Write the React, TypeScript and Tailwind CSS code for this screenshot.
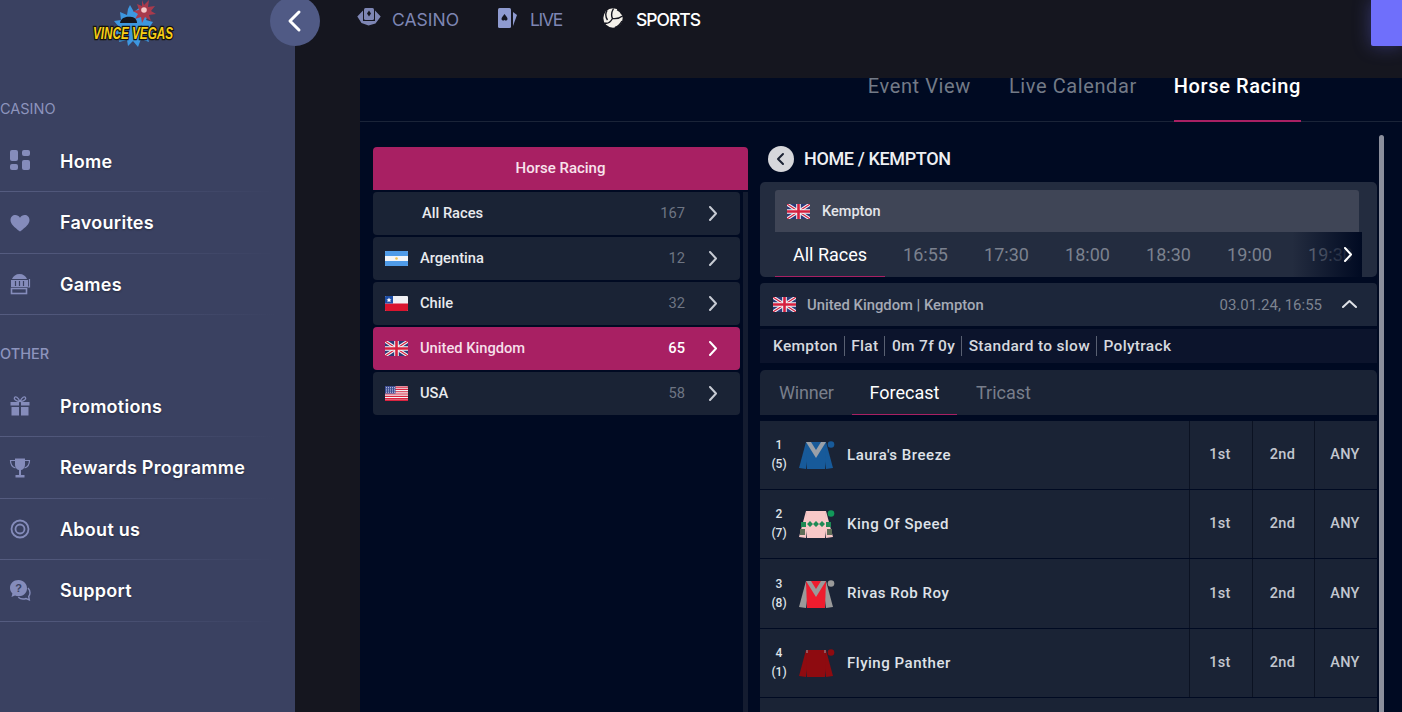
import React from "react";

const UK = () => (
  <svg width="23" height="15" viewBox="0 0 23 15" className="shrink-0 block">
    <rect width="23" height="15" rx="1" fill="#2b3a78" />
    <path d="M0 0L23 15M23 0L0 15" stroke="#f3f3f6" strokeWidth="3.2" />
    <path d="M0 0L23 15M23 0L0 15" stroke="#d5203f" strokeWidth="1.1" />
    <path d="M11.5 0V15M0 7.5H23" stroke="#f3f3f6" strokeWidth="4.6" />
    <path d="M11.5 0V15M0 7.5H23" stroke="#d5203f" strokeWidth="2.6" />
  </svg>
);
const AR = () => (
  <svg width="23" height="15" viewBox="0 0 23 15" className="shrink-0 block">
    <rect width="23" height="15" rx="1" fill="#f3f5f8" />
    <path d="M0 1a1 1 0 0 1 1-1h21a1 1 0 0 1 1 1v4H0z" fill="#4f9be8" />
    <path d="M0 10h23v4a1 1 0 0 1-1 1H1a1 1 0 0 1-1-1z" fill="#4f9be8" />
    <circle cx="11.5" cy="7.5" r="1.3" fill="#f2c14e" />
  </svg>
);
const CL = () => (
  <svg width="23" height="15" viewBox="0 0 23 15" className="shrink-0 block">
    <rect width="23" height="15" rx="1" fill="#f1f1f4" />
    <path d="M0 7.5h23V14a1 1 0 0 1-1 1H1a1 1 0 0 1-1-1z" fill="#d9142e" />
    <path d="M0 1a1 1 0 0 1 1-1h7v7.500H0z" fill="#1e4fa8" />
    <path d="M4 1.600l.8 1.600 1.700.2-1.300 1.100.4 1.700L4 5.300l-1.600.9.4-1.700-1.300-1.100 1.700-.2z" fill="#fff" />
  </svg>
);
const US = () => (
  <svg width="23" height="15" viewBox="0 0 23 15" className="shrink-0 block">
    <rect width="23" height="15" rx="1" fill="#f3f3f6" />
    <path d="M0 1.100H23M0 3.400H23M0 5.700H23M0 8H23M0 10.300H23M0 12.600H23" stroke="#d8233f" strokeWidth="1.150" />
    <rect y="13.400" width="23" height="1.600" fill="#d8233f" />
    <rect width="10.500" height="7.600" fill="#3f4f94" />
    <path d="M1 1.500h9M1 3.200h9M1 4.900h9M1 6.400h9" stroke="#dfe3f2" strokeWidth=".7" strokeDasharray="1 1" />
  </svg>
);

const Logo = () => (
  <svg width="90" height="54" viewBox="0 0 90 54" className="block">
    <path d="M42 5l4 7 5-4 2 6 8-1-3 7 7 2-4 6 7 7-9 0 2 7-8-3-3 8-5-6-5 5-1-6-8 2 2-7-8-2 6-6-5-6 7-1-1-8 7 3 1-6z" fill="#3d97e0" />
    <path d="M54 0l2 5 5-5-1 7 7-1-4 5 5 3-7 1 2 6-6-4-3 6-1-6-6 2 3-5-5-3 6-1-2-6 5 2z" fill="#a83a4c" />
    <circle cx="56" cy="10" r="2.800" fill="#f6c9c9" />
    <path d="M32 23c1-5 5-7 12-6 3 .5 5 3 5 6z" fill="#15161f" />
    <g transform="translate(0 39) scale(1 1.350)">
      <text
        x="45"
        y="0"
        textAnchor="middle"
        textLength="80"
        lengthAdjust="spacingAndGlyphs"
        fontFamily="'Liberation Sans', sans-serif"
        fontWeight="700"
        fontStyle="italic"
        fontSize="12"
        fill="#f7cf17"
        stroke="#15130c"
        strokeWidth="2"
        paintOrder="stroke"
      >
        VINCE VEGAS
      </text>
    </g>
  </svg>
);

const ic = "#858cbb";
const IconGrid = () => (
  <svg width="22" height="22" viewBox="0 0 22 22" fill={ic}>
    <rect x="1" y="0" width="8" height="11" rx="2" />
    <rect x="13" y="0" width="8" height="6" rx="2" />
    <rect x="1" y="14" width="8" height="6" rx="2" />
    <rect x="13" y="10" width="8" height="10" rx="2" />
  </svg>
);
const IconHeart = () => (
  <svg width="22" height="22" viewBox="0 0 22 22" fill={ic}>
    <path d="M11 19.500C5 15 1.500 12 1.500 8c0-3 2.200-5 4.800-5 2 0 3.600 1 4.700 2.800C12.100 4 13.700 3 15.700 3c2.600 0 4.800 2 4.800 5 0 4-3.500 7-9.500 11.500z" />
  </svg>
);
const IconSlot = () => (
  <svg width="22" height="22" viewBox="0 0 22 22" fill="none" stroke={ic}>
    <path d="M3 6c1-3 4-5 7.500-5S17 3 18 6z" fill={ic} stroke="none" />
    <rect x="2" y="7" width="17" height="7" fill={ic} stroke="none" />
    <path d="M6.500 8v5M10.500 8v5M14.500 8v5" stroke="#3a4161" strokeWidth="1.200" />
    <rect x="2.500" y="15.500" width="15" height="5" strokeWidth="1.600" />
    <path d="M20.500 6v8h-2" strokeWidth="1.200" />
  </svg>
);
const IconGift = () => (
  <svg width="22" height="22" viewBox="0 0 22 22" fill={ic}>
    <rect x="1.500" y="7" width="8.500" height="3.500" />
    <rect x="12" y="7" width="8.500" height="3.500" />
    <rect x="2.500" y="12" width="7.500" height="8.500" />
    <rect x="12" y="12" width="7.500" height="8.500" />
    <path d="M11 6.500C9 2 6.500 1 5.500 2.500S7 6.500 11 6.500zm0 0c2-4.500 4.500-5.500 5.500-4S15 6.500 11 6.500z" fill="none" stroke={ic} strokeWidth="1.300" />
  </svg>
);
const IconTrophy = () => (
  <svg width="22" height="22" viewBox="0 0 22 22" fill={ic}>
    <path d="M6 1.500h10v6c0 3.500-2 5.500-5 5.500S6 11 6 7.500z" />
    <path d="M6 3.500H1.500c0 4 1.500 6.500 5 7.500M16 3.500h4.500c0 4-1.500 6.500-5 7.500" fill="none" stroke={ic} strokeWidth="1.200" />
    <rect x="10" y="13" width="2" height="5" />
    <rect x="6.500" y="18" width="9" height="2.500" />
  </svg>
);
const IconTarget = () => (
  <svg width="22" height="22" viewBox="0 0 22 22" fill="none" stroke={ic}>
    <circle cx="11" cy="11" r="8.500" strokeWidth="1.800" />
    <circle cx="11" cy="11" r="4.500" strokeWidth="1.800" />
  </svg>
);
const IconSupport = () => (
  <svg width="22" height="22" viewBox="0 0 22 22" fill={ic}>
    <path d="M9.500 0C4.500 0 1 3.500 1 8c0 2.200.9 4 2.400 5.400L2.500 17l3.500-1.400c1 .4 2.200.6 3.500.6 5 0 8.500-3.500 8.500-8S14.500 0 9.500 0z" />
    <path d="M19 8c1.500 1.500 2 3 2 4.800 0 1.500-.5 2.700-1.300 3.700l.6 3.300-3.200-1.300c-3 1-6 .3-7.800-1.300" fill="none" stroke={ic} strokeWidth="1.400" />
    <text x="9.500" y="12" textAnchor="middle" fontSize="11" fontWeight="700" fontFamily="'Liberation Sans', sans-serif" fill="#3a4161">?</text>
  </svg>
);

const IconCasino = () => (
  <svg width="24" height="18" viewBox="0 0 24 18" fill="#7e86b4">
    <rect x="7" y="0" width="10" height="12" rx="1.500" />
    <path d="M6 2.500L.3 8.500 4.500 15l7 2.500 7-2 5.200-7L18 2.500v10.500H6z" />
    <path d="M12 2.500l2 3-2 3-2-3z" fill="#15161f" />
  </svg>
);
const IconLive = () => (
  <svg width="20" height="20" viewBox="0 0 20 20" fill="#8f9bd0">
    <rect x="0" y="0" width="13" height="20" rx="1.500" />
    <path d="M15 4l4 3-4 11z" />
    <path d="M6.500 6c2 2.500 3 3.500 3 5a1.600 1.600 0 0 1-3 .7 1.600 1.600 0 0 1-3-.7c0-1.500 1-2.500 3-5z" fill="#15161f" />
  </svg>
);
const IconBall = () => (
  <svg width="20" height="20" viewBox="0 0 20 20">
    <circle cx="10" cy="10" r="9.700" fill="#f4f1ea" />
    <path d="M10.500.5C8.500 4 8 7.500 9.500 10.500M9.500 10.500c4 .5 7 0 10-2.500M9.500 10.500C7.500 14 4.500 16 1.500 15M4 2.500C2 6 2.500 9 4.500 12M14 1.500c2.500 1 4 2.500 5 5M12 19.500c3-1 5-3 7-6.500" fill="none" stroke="#15161f" strokeWidth="1.400" />
  </svg>
);

const Chevron = ({ dir = "right", className = "" }: { dir?: "right" | "left" | "up"; className?: string }) => {
  const d = dir === "right" ? "M4 1l6 6.500L4 14" : dir === "left" ? "M10 1L4 7.500l6 6.500" : "M1 10l6.500-6 6.500 6";
  return (
    <svg width="15" height="15" viewBox="0 0 15 15" fill="none" stroke="currentColor" strokeWidth="2" strokeLinecap="round" strokeLinejoin="round" className={className}>
      <path d={d} />
    </svg>
  );
};

const SideItem = ({ icon, label }: { icon: React.ReactNode; label: string }) => (
  <div className="h-[61.500px] flex items-center relative">
    <div className="w-[60px] pl-[9px] flex items-center">{icon}</div>
    <span className="text-[18px] font-semibold text-white tracking-[0.015em] font-['Inter',sans-serif] [text-shadow:0_1px_2px_rgba(0,0,0,0.35)]">{label}</span>
    <div className="absolute left-0 bottom-0 w-[275px] h-[1px] bg-gradient-to-r from-[#555c80] to-transparent" />
  </div>
);

const Country = ({ flag, name, count, active }: { flag?: React.ReactNode; name: string; count: number; active?: boolean }) => (
  <div className={`h-[43px] rounded-[4px] flex items-center pr-[19px] ${active ? "bg-[#a82063]" : "bg-[#1a2335]"}`}>
    <div className="w-[47px] pl-[12px]">{flag}</div>
    <span className={`text-[14.700px] font-medium flex-1 ${active ? "text-[#f6dfe9]" : "text-[#e8eaee]"} ${flag ? "" : "pl-[2px]"}`}>{name}</span>
    <span className={`text-[14.700px] mr-[21px] ${active ? "text-white font-medium" : "text-[#6e7583]"}`}>{count}</span>
    <Chevron className={active ? "text-white" : "text-[#c7cbd3]"} />
  </div>
);

const Silk = ({ body, sleeve, chevron, cap, dots, ticks }: { body: string; sleeve: string; chevron?: string; cap: string; dots?: boolean; ticks?: boolean }) => (
  <svg width="38" height="32" viewBox="0 0 38 32" className="shrink-0">
    <path d="M8 3L1 29l7 1 2-15z" fill={sleeve} />
    <path d="M28 3l7 26-7 1-2-15z" fill={sleeve} />
    <path d="M8 3h20l-1 27H9z" fill={body} />
    {chevron && <path d="M8 3h5l5 8 5-8h5L18 19z" fill={chevron} />}
    {dots && (
      <g>
        <path d="M9 16l3-3 3 3-3 3zM15 16l3-3 3 3-3 3zM21 16l3-3 3 3-3 3z" fill="#1f8a55" />
        <path d="M3 14h5v5H3zM28 14h5v5h-5z" fill="#1f8a55" />
        <path d="M2 21h5v6H2zM29 21h5v6h-5z" fill="#5f6e58" />
      </g>
    )}
    {ticks && <path d="M9 3v3M27 3v3" stroke="#9aa0a8" strokeWidth="1" />}
    <circle cx="33" cy="5.500" r="3.300" fill={cap} />
  </svg>
);

const Runner = ({ n, d, silk, name, h }: { n: number; d: number; silk: React.ReactNode; name: string; h: string }) => (
  <div className={`${h} shrink-0 bg-[#1a2335] flex items-center text-[#dfe2e8]`}>
    <div className="w-[429px] flex items-center h-full">
      <div className="w-[38px] flex flex-col items-center text-[12px] leading-[19px] font-medium">
        <span>{n}</span>
        <span>({d})</span>
      </div>
      <div className="w-[49px]">{silk}</div>
      <span className="text-[15px] font-medium tracking-[0.035em]">{name}</span>
    </div>
    {["1st", "2nd", "ANY"].map((t, i) => (
      <div key={t} className={`h-full flex items-center justify-center text-[14.500px] font-medium text-[#c3c7cf] tracking-[0.02em] border-l border-l-[#0b1222] pr-[2px] ${i === 1 ? "w-[62px]" : "w-[63px]"}`}>
        {t}
      </div>
    ))}
  </div>
);

export default function App() {
  return (
    <div className="h-[712px] w-[1402px] overflow-hidden flex bg-[#15161f] font-['Roboto',sans-serif] relative">
      {/* Sidebar */}
      <aside className="w-[295px] shrink-0 bg-[#3a4161] relative">
        <div className="h-[54px] flex justify-start pl-[88px]">
          <Logo />
        </div>
        <div className="mt-[45px] h-[20px] flex items-center text-[14.500px] text-[#8d94bd] font-['Inter',sans-serif]">CASINO</div>
        <div className="mt-[11.500px]">
          <SideItem icon={<IconGrid />} label="Home" />
          <SideItem icon={<IconHeart />} label="Favourites" />
          <SideItem icon={<IconSlot />} label="Games" />
        </div>
        <div className="mt-[29px] h-[20px] flex items-center text-[14.500px] font-medium text-[#8d94bd] font-['Inter',sans-serif]">OTHER</div>
        <div className="mt-[11.500px]">
          <SideItem icon={<IconGift />} label="Promotions" />
          <SideItem icon={<IconTrophy />} label="Rewards Programme" />
          <SideItem icon={<IconTarget />} label="About us" />
          <SideItem icon={<IconSupport />} label="Support" />
        </div>
        <div className="absolute left-[270px] top-[-4px] w-[50px] h-[50px] rounded-full bg-[#505a85] flex items-center justify-center text-white z-10">
          <svg width="20" height="24" viewBox="0 0 20 24" fill="none" stroke="currentColor" strokeWidth="3" strokeLinecap="round" strokeLinejoin="round">
            <path d="M14 3L5 12l9 9" />
          </svg>
        </div>
      </aside>

      {/* Main */}
      <main className="flex-1 flex flex-col min-w-0 relative">
        <header className="h-[78px] shrink-0 flex items-start pl-[62px] pt-[7px]">
          <div className="flex items-center h-[26px] w-[141px]">
            <div className="-translate-y-[3px]"><IconCasino /></div>
            <span className="ml-[11px] text-[17.500px] text-[#7e86b4] font-['Inter',sans-serif]">CASINO</span>
          </div>
          <div className="flex items-center h-[26px] w-[105px]">
            <div className="-translate-y-[2px]"><IconLive /></div>
            <span className="ml-[12px] text-[17.500px] tracking-[-1.300px] text-[#7e86b4] font-['Inter',sans-serif]">LIVE</span>
          </div>
          <div className="flex items-center h-[26px]">
            <div className="-translate-y-[2px]"><IconBall /></div>
            <span className="ml-[13px] text-[17.500px] tracking-[-1px] font-medium text-white font-['Inter',sans-serif]">SPORTS</span>
          </div>
        </header>
        <div className="absolute right-0 top-0 w-[31px] h-[46px] bg-[#6f6ffb] rounded-bl-[2px] shadow-[0_0_18px_rgba(111,111,251,0.35)]" />

        {/* Panel */}
        <section className="ml-[65px] flex-1 min-h-0 bg-[#000a22] flex flex-col">
          <nav className="h-[44px] shrink-0 border-b border-b-[#1a2438] flex justify-end pr-[101px] text-[20px] tracking-[0.03em] leading-[16px] gap-[38px]">
            <span className="text-[#737a87]">Event View</span>
            <span className="text-[#737a87] mr-[-1px]">Live Calendar</span>
            <span className="h-[44px] text-white font-medium border-b-[2px] border-b-[#a82063]">Horse Racing</span>
          </nav>

          <div className="flex-1 min-h-0 flex pl-[13px] pt-[25px] relative">
            {/* Left column */}
            <div className="w-[375px] shrink-0 flex flex-col">
              <div className="h-[43px] shrink-0 bg-[#a82063] rounded-t-[4px] flex items-center justify-center text-[15px] font-medium text-[#f8e3ec]">Horse Racing</div>
              <div className="flex flex-1 min-h-0 mt-[2px]">
                <div className="w-[367px] flex flex-col gap-[2px]">
                  <Country name="All Races" count={167} />
                  <Country flag={<AR />} name="Argentina" count={12} />
                  <Country flag={<CL />} name="Chile" count={32} />
                  <Country flag={<UK />} name="United Kingdom" count={65} active />
                  <Country flag={<US />} name="USA" count={58} />
                </div>
                <div className="ml-[3px] w-[5px] bg-[#141c30]" />
              </div>
            </div>

            {/* Right column */}
            <div className="ml-[12px] w-[617px] shrink-0 flex flex-col">
              <div className="h-[36px] shrink-0 flex items-start pl-[8px] -mt-[1px]">
                <div className="w-[26px] h-[26px] rounded-full bg-[#d6d7db] flex items-center justify-center text-[#1b2233]">
                  <svg width="12" height="14" viewBox="0 0 12 14" fill="none" stroke="currentColor" strokeWidth="2" strokeLinecap="round" strokeLinejoin="round"><path d="M8 2L3 7l5 5" /></svg>
                </div>
                <span className="ml-[10px] text-[18px] leading-[26px] font-medium text-[#eef0f3] tracking-[-0.02em]">HOME / KEMPTON</span>
              </div>

              <div className="h-[95px] shrink-0 bg-[#232c3f] rounded-[5px] pt-[8px] relative overflow-hidden">
                <div className="h-[42px] ml-[15px] mr-[18px] bg-[#3f4556] rounded-t-[3px] flex items-center pl-[12px] pt-[1px]">
                  <UK />
                  <span className="ml-[12px] text-[14.500px] font-medium text-[#e4e6ea]">Kempton</span>
                </div>
                <div className="h-[45px] ml-[15px] mr-[15px] flex text-[18px] text-[#7b818e] items-center relative overflow-hidden">
                  <span className="w-[110px] shrink-0 h-full flex items-center justify-center text-white border-b border-b-[#a82063]">All Races</span>
                  {["16:55", "17:30", "18:00", "18:30", "19:00", "19:30"].map((t) => (
                    <span key={t} className="w-[81px] shrink-0 text-center">{t}</span>
                  ))}
                  <div className="absolute right-0 top-0 bottom-0 w-[70px] bg-gradient-to-r from-transparent to-[#000a22]" />
                  <Chevron className="absolute right-[6px] top-[15px] text-white" />
                </div>
              </div>

              <div className="mt-[6px] h-[43px] shrink-0 bg-[#1c263a] rounded-t-[4px] flex items-center pl-[13px] pr-[20px]">
                <UK />
                <span className="ml-[11px] pt-[1px] text-[14.800px] font-medium text-[#a5aab5] flex-1">United Kingdom | Kempton</span>
                <span className="pt-[1px] text-[15px] text-[#7d8390] mr-[20px]">03.01.24, 16:55</span>
                <Chevron dir="up" className="text-[#dfe2e8]" />
              </div>

              <div className="mt-[3px] h-[34px] shrink-0 bg-[#0c142c] flex items-center pl-[13px] text-[15.500px] text-[#d6d9df] font-medium tracking-[0.02em]">
                {["Kempton", "Flat", "0m 7f 0y", "Standard to slow", "Polytrack"].map((t, i) => (
                  <span key={t} className={i ? "ml-[6px] pl-[6.500px] border-l border-l-[#596072] leading-[20px]" : "leading-[20px]"}>{t}</span>
                ))}
              </div>

              <div className="mt-[7px] h-[45px] shrink-0 bg-[#1a2335] rounded-t-[5px] flex items-center text-[18px]">
                <span className="w-[92px] pl-[19px] text-[#787e8b] tracking-[-0.01em]">Winner</span>
                <span className="w-[105px] h-full flex items-center justify-center text-white border-b border-b-[#a82063]">Forecast</span>
                <span className="ml-[19px] text-[#787e8b]">Tricast</span>
              </div>

              <div className="mt-[6px] flex-1 min-h-0 flex flex-col gap-[1px] overflow-hidden">
                <Runner h="h-[68px]" n={1} d={5} name="Laura's Breeze" silk={<Silk body="#175a9a" sleeve="#175a9a" chevron="#9aa0a8" cap="#175a9a" />} />
                <Runner h="h-[68px]" n={2} d={7} name="King Of Speed" silk={<Silk body="#f8c8c8" sleeve="#f8c8c8" cap="#12985a" dots />} />
                <Runner h="h-[69px]" n={3} d={8} name="Rivas Rob Roy" silk={<Silk body="#ee1c2e" sleeve="#9a9a9a" chevron="#9a9a9a" cap="#9a9a9a" />} />
                <Runner h="h-[68px]" n={4} d={1} name="Flying Panther" silk={<Silk body="#8e0b10" sleeve="#8e0b10" cap="#8e0b10" ticks />} />
                <div className="flex-1 bg-[#1a2335]" />
              </div>
            </div>

            <div className="ml-[2px] mt-[-12px] w-[5px] bg-[#8b8f9c] rounded-t-[3px]" />
          </div>
        </section>
      </main>
    </div>
  );
}
